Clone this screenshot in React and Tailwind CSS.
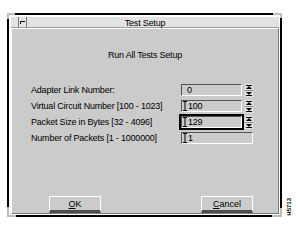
import React from "react";

const rows = [
  { label: "Adapter Link Number:", value: "0", cursor: false, focused: false, spinner: true },
  { label: "Virtual Circuit Number [100 - 1023]", value: "100", cursor: true, focused: false, spinner: true },
  { label: "Packet Size in Bytes [32 - 4096]", value: "129", cursor: true, focused: true, spinner: true },
  { label: "Number of Packets [1 - 1000000]", value: "1", cursor: true, focused: false, spinner: false },
];

function IBeam() {
  return (
    <svg width="4" height="10" viewBox="0 0 4 10" className="shrink-0">
      <path d="M0 0.5H4M2 0.5V9.5M0 9.5H4" stroke="#000" strokeWidth="1" fill="none" />
    </svg>
  );
}

function Spinner() {
  return (
    <svg width="8" height="13" viewBox="0 0 8 13" className="ml-[1px] shrink-0">
      <rect x="0" y="0" width="8" height="13" fill="#e2e2e2" />
      <rect x="0" y="6" width="8" height="1" fill="#8a8a8a" />
      <rect x="1" y="1" width="6" height="1" fill="#000" />
      <path d="M1 5 L4 2 L7 5Z" fill="#000" />
      <path d="M1 8 L4 11 L7 8Z" fill="#000" />
      <rect x="1" y="11" width="6" height="1" fill="#000" />
    </svg>
  );
}

function Field({ value, cursor, focused, wide }) {
  return (
    <div
      className={`flex h-[16px] border-2 ${focused ? "border-black" : "border-transparent"} ${wide ? "w-[76px]" : "w-[65px]"}`}
    >
      <div
        className={`flex flex-1 items-center border border-t-[#555555] border-l-[#555555] border-b-white border-r-white ${cursor ? "pl-[1px]" : "pl-[4px]"}`}
      >
        {cursor && <IBeam />}
        <span className="ml-[1px] text-[9px] leading-[10px] tracking-[-0.2px]">{value}</span>
      </div>
    </div>
  );
}

function Corner({ pos }) {
  const map = {
    tl: "-top-[2px] -left-[2px] w-[8px] h-[6px] border-t-2 border-l-2",
    tr: "-top-[2px] -right-[2px] w-[9px] h-[5px] border-t-2 border-r-2",
    bl: "-bottom-[2px] -left-[2px] w-[9px] h-[10px] border-b-2 border-l-2",
    br: "-bottom-[2px] -right-[2px] w-[10px] h-[9px] border-b-2 border-r-2",
  };
  return <div className={`absolute border-[#bdbdbd] ${map[pos]}`} />;
}

export default function App() {
  return (
    <div className="flex h-[246px] w-[300px] items-start bg-white font-['Liberation_Sans',Arial,sans-serif] text-black">
      <div className="relative ml-[7px] mt-[13px] flex h-[204px] w-[275px] flex-col border-2 border-black bg-white pt-[2px] pl-[2px] pr-[1px] pb-[1px]">
        <Corner pos="tl" />
        <Corner pos="tr" />
        <Corner pos="bl" />
        <Corner pos="br" />

        {/* title bar */}
        <div className="grid h-[11px] shrink-0 items-center border-b border-[#a0a0a0] bg-[#e2e2e2]">
          <div className="ml-[7px] flex h-[11px] w-[9px] items-center justify-center self-start border-x border-[#7a7a7a] [grid-area:1/1] justify-self-start">
            <svg width="5" height="3" viewBox="0 0 5 3">
              <path d="M0.5 3V0.5H5" stroke="#000" strokeWidth="1" fill="none" />
            </svg>
          </div>
          <div className="text-[9px] leading-[10px] tracking-[-0.2px] [grid-area:1/1] justify-self-center">Test Setup</div>
        </div>

        {/* dialog body */}
        <div className="flex flex-1 flex-col border border-t-white border-l-white border-b-[#7a7a7a] border-r-[#7a7a7a] bg-[#cbcbcb] pt-[20px]">
          <div className="h-[12px] text-center text-[9px] leading-[12px] tracking-[-0.2px]">Run All Tests Setup</div>

          <div className="mt-[21px] flex flex-col pl-[19px]">
            {rows.map((r) => (
              <div key={r.label} className="flex h-[16px] items-center">
                <div className="w-[148px] text-[9px] leading-[12px] tracking-[-0.2px] whitespace-nowrap">{r.label}</div>
                <Field value={r.value} cursor={r.cursor} focused={r.focused} wide={!r.spinner} />
                {r.spinner && <Spinner />}
              </div>
            ))}
          </div>

          <div className="mt-auto flex justify-between pl-[37px] pr-[25px]">
            <button className="flex h-[17px] w-[52px] items-center justify-center border-x border-t border-white border-b-[3px] border-b-[#4d4d4d] text-[9px] leading-[10px]">
              <span><span className="underline">O</span>K</span>
            </button>
            <button className="flex h-[17px] w-[52px] items-center justify-center border-x border-t border-white border-b-[3px] border-b-[#4d4d4d] text-[9px] leading-[10px]">
              <span><span className="underline">C</span>ancel</span>
            </button>
          </div>
        </div>
      </div>

      <div className="ml-[4px] mt-[198px] rotate-180 text-[6px] font-bold leading-[6px] [writing-mode:vertical-rl]">H5713</div>
    </div>
  );
}
